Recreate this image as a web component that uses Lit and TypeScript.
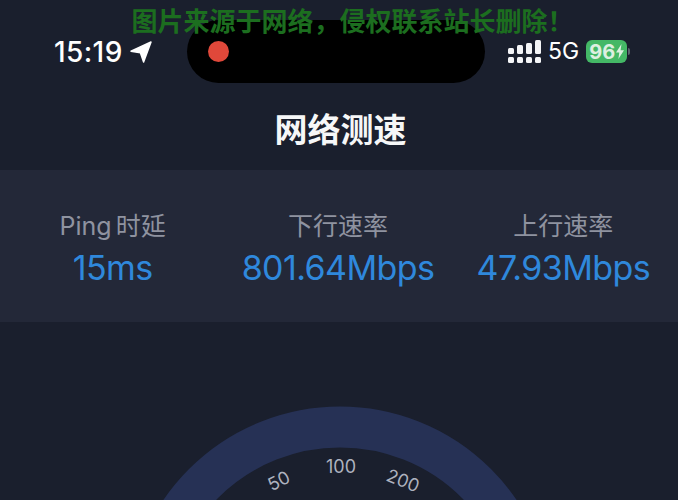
import { LitElement, css, html, svg } from 'lit'
import { customElement } from 'lit/decorators.js'

const STATS = [
  { label: 'Ping 时延', value: '15ms' },
  { label: '下行速率', value: '801.64Mbps' },
  { label: '上行速率', value: '47.93Mbps' },
]

// gauge tick labels: text, x, y, rotation, all in gauge svg coords
const TICKS = [
  { text: '50', x: 279, y: 165, rotate: -27 },
  { text: '100', x: 341, y: 151, rotate: 0 },
  { text: '200', x: 403, y: 165, rotate: 22 },
]

// signal columns: x and top of the upper segment
const BARS = [
  { x: 0, top: 8 },
  { x: 9, top: 5 },
  { x: 18, top: 3 },
  { x: 27, top: 0 },
]

@customElement('app-root')
export class AppRoot extends LitElement {
  static styles = css`
    :host {
      display: block;
      position: relative;
      width: 678px;
      height: 500px;
      overflow: hidden;
      background: #1a1f2d;
      font-family: Inter, 'Noto Sans CJK SC', sans-serif;
      color: #fff;
    }

    .watermark {
      position: absolute;
      top: 6px;
      left: 0;
      right: 0;
      z-index: 2;
      padding-left: 27px;
      text-align: center;
      font-size: 26px;
      line-height: 28px;
      font-weight: 700;
      color: #1c6e1f;
      font-family: 'Noto Sans CJK SC', sans-serif;
      white-space: nowrap;
    }

    .status {
      display: flex;
      align-items: center;
      height: 63px;
      padding-top: 20px;
    }
    .status-left {
      display: flex;
      align-items: center;
      gap: 7px;
      width: 133px;
      padding-left: 54px;
      font-size: 28px;
      font-weight: 500;
      letter-spacing: 0.4px;
    }
    .island {
      display: flex;
      align-items: center;
      width: 298px;
      height: 63px;
      padding-left: 21px;
      box-sizing: border-box;
      border-radius: 32px;
      background: #000;
    }
    .rec {
      width: 21px;
      height: 21px;
      border-radius: 50%;
      background: #e0483a;
    }
    .status-right {
      display: flex;
      align-items: center;
      margin-left: 23px;
      gap: 7px;
    }
    .signal {
      display: block;
    }
    .net {
      font-size: 23px;
      font-weight: 400;
      line-height: 1;
    }
    .battery {
      width: 41px;
      height: 23px;
      border-radius: 6px;
      background: #44b866;
      display: flex;
      align-items: center;
      justify-content: center;
      gap: 1px;
      color: #dcefe0;
      font-size: 20px;
      font-weight: 700;
    }
    .battery-cap {
      width: 2px;
      height: 7px;
      margin-left: -6px;
      border-radius: 0 2px 2px 0;
      background: #5d6270;
    }

    .title {
      height: 87px;
      display: flex;
      align-items: center;
      justify-content: center;
      padding: 3px 0 0 3px;
      box-sizing: border-box;
      font-family: 'Noto Sans CJK SC', sans-serif;
      font-size: 33px;
      font-weight: 700;
      color: #f6f7f8;
    }

    .stats {
      display: grid;
      grid-template-columns: repeat(3, 1fr);
      height: 152px;
      padding: 36px 2px 0 0;
      box-sizing: border-box;
      background: #232838;
      text-align: center;
    }
    .label {
      font-size: 25px;
      line-height: 40px;
      color: #8f93a0;
      word-spacing: -3px;
    }
    .value {
      font-size: 34px;
      line-height: 44px;
      color: #2f88dc;
      letter-spacing: -0.6px;
    }

    .gauge {
      display: block;
    }
    .gauge text {
      fill: #aeb2bf;
      font-size: 18px;
      text-anchor: middle;
    }
  `

  private _signal() {
    return html`<svg class="signal" width="33" height="23" viewBox="0 0 33 23" fill="#f4f5f7">
      ${BARS.map(
        (b) => svg`<rect x=${b.x} y=${b.top} width="6" height=${14 - b.top} rx="1.5"></rect>
          <rect x=${b.x} y="17" width="6" height="6" rx="1.5"></rect>`
      )}
    </svg>`
  }

  render() {
    return html`
      <div class="watermark">图片来源于网络，侵权联系站长删除！</div>
      <div class="status">
        <div class="status-left">
          <span>15:19</span>
          <svg width="22" height="22" viewBox="0 0 22 22">
            <path fill="#fff" stroke="#fff" stroke-width="1.5" stroke-linejoin="round" d="M21 1 L13.6 21 L10.4 11.8 L1 10.2 Z"></path>
          </svg>
        </div>
        <div class="island"><div class="rec"></div></div>
        <div class="status-right">
          ${this._signal()}
          <span class="net">5G</span>
          <div class="battery">
            <span>96</span>
            <svg width="8" height="15" viewBox="0 0 8 15">
              <path fill="#dcefe0" d="M5.5 0 L0 8.6 H3.3 L2.4 15 L8 6.2 H4.6 Z"></path>
            </svg>
          </div>
          <div class="battery-cap"></div>
        </div>
      </div>
      <div class="title">网络测速</div>
      <div class="stats">
        ${STATS.map(
          (s) => html`<div>
            <div class="label">${s.label}</div>
            <div class="value">${s.value}</div>
          </div>`
        )}
      </div>
      <svg class="gauge" width="678" height="178" viewBox="0 0 678 178">
        <circle cx="340" cy="298" r="193" fill="none" stroke="#263155" stroke-width="41"></circle>
        ${TICKS.map(
          (t) => svg`<text x=${t.x} y=${t.y} transform="rotate(${t.rotate} ${t.x} ${t.y - 6})">${t.text}</text>`
        )}
      </svg>
    `
  }
}
